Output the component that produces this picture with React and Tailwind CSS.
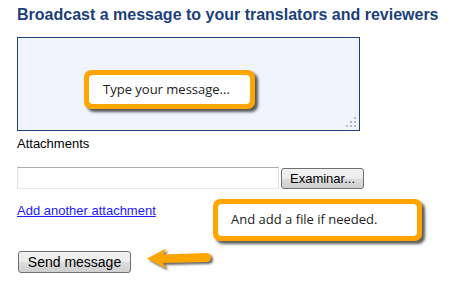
import React from "react";

function Callout({ className, children }) {
  return (
    <div
      className={
        "absolute rounded-[7px] bg-[#ffa500] p-[5px] shadow-[3px_3px_3px_rgba(0,0,0,0.65)] " +
        className
      }
    >
      <div className="flex h-full w-full items-center rounded-[4px] bg-white text-[13px] text-[#222] [font-family:'Open_Sans','Noto_Sans',sans-serif]">
        {children}
      </div>
    </div>
  );
}

export default function App() {
  return (
    <div className="relative h-[283px] w-[457px] overflow-hidden bg-white pl-[17px] pt-[5px] [font-family:'Liberation_Sans',Arial,sans-serif]">
      <h1 className="text-[16px] font-bold leading-[20px] text-[#1c3f7c] whitespace-nowrap">
        Broadcast a message to your translators and reviewers
      </h1>

      <div className="relative mt-[12px] h-[94px] w-[343px] border border-[#1e3f7c] bg-[#f0f5fd]">
        <div className="absolute bottom-[3px] right-[3px] grid grid-cols-3 gap-[2px]">
          <span className="h-[2px] w-[2px]" />
          <span className="h-[2px] w-[2px]" />
          <span className="h-[2px] w-[2px] bg-[#b5b9c2]" />
          <span className="h-[2px] w-[2px]" />
          <span className="h-[2px] w-[2px] bg-[#b5b9c2]" />
          <span className="h-[2px] w-[2px] bg-[#b5b9c2]" />
          <span className="h-[2px] w-[2px] bg-[#b5b9c2]" />
          <span className="h-[2px] w-[2px] bg-[#b5b9c2]" />
          <span className="h-[2px] w-[2px] bg-[#b5b9c2]" />
        </div>
      </div>

      <div className="mt-[5px] text-[13px] leading-[16px] text-black">Attachments</div>

      <div className="mt-[15px] flex items-start gap-[2px]">
        <div className="h-[22px] w-[262px] border border-t-[#abadb3] border-l-[#e2e3ea] border-r-[#dbdfe6] border-b-[#e3e9ef] bg-white" />
        <button className="mt-[1px] flex h-[21px] w-[83px] items-center justify-center rounded-[3px] border border-[#707070] bg-[linear-gradient(#f2f2f2_0%,#ebebeb_50%,#dddddd_50%,#cfcfcf_100%)] text-[13px] leading-none text-black">
          Examinar...
        </button>
      </div>

      <div className="mt-[14px] text-[13px] leading-[16px]">
        <a href="#" className="text-[#1a1aff] underline">
          Add another attachment
        </a>
      </div>

      <button className="ml-[1px] mt-[32px] flex h-[22px] w-[113px] items-center justify-center rounded-[3px] border border-[#707070] bg-[linear-gradient(#f2f2f2_0%,#ebebeb_50%,#dddddd_50%,#cfcfcf_100%)] text-[14px] leading-none text-black">
        Send message
      </button>

      <Callout className="left-[84px] top-[70px] h-[39px] w-[171px]">
        <span className="pl-[14px]">Type your message...</span>
      </Callout>

      <Callout className="left-[213px] top-[199px] h-[42px] w-[209px]">
        <span className="pl-[13px]">And add a file if needed.</span>
      </Callout>

      <svg
        className="absolute left-[145px] top-[245px] drop-shadow-[2px_2px_1px_rgba(0,0,0,0.6)]"
        width="72"
        height="28"
        viewBox="0 0 72 28"
      >
        <path
          d="M2 13.5 L20 4 Q21 3.5 20.5 5 L18 9.5 Q40 8.5 61 8 Q66 8 66 12.5 Q66 17 61 17 Q40 17.5 18 18 L20.5 22 Q21 23.5 20 23 Z"
          fill="#ffa500"
        />
      </svg>
    </div>
  );
}
